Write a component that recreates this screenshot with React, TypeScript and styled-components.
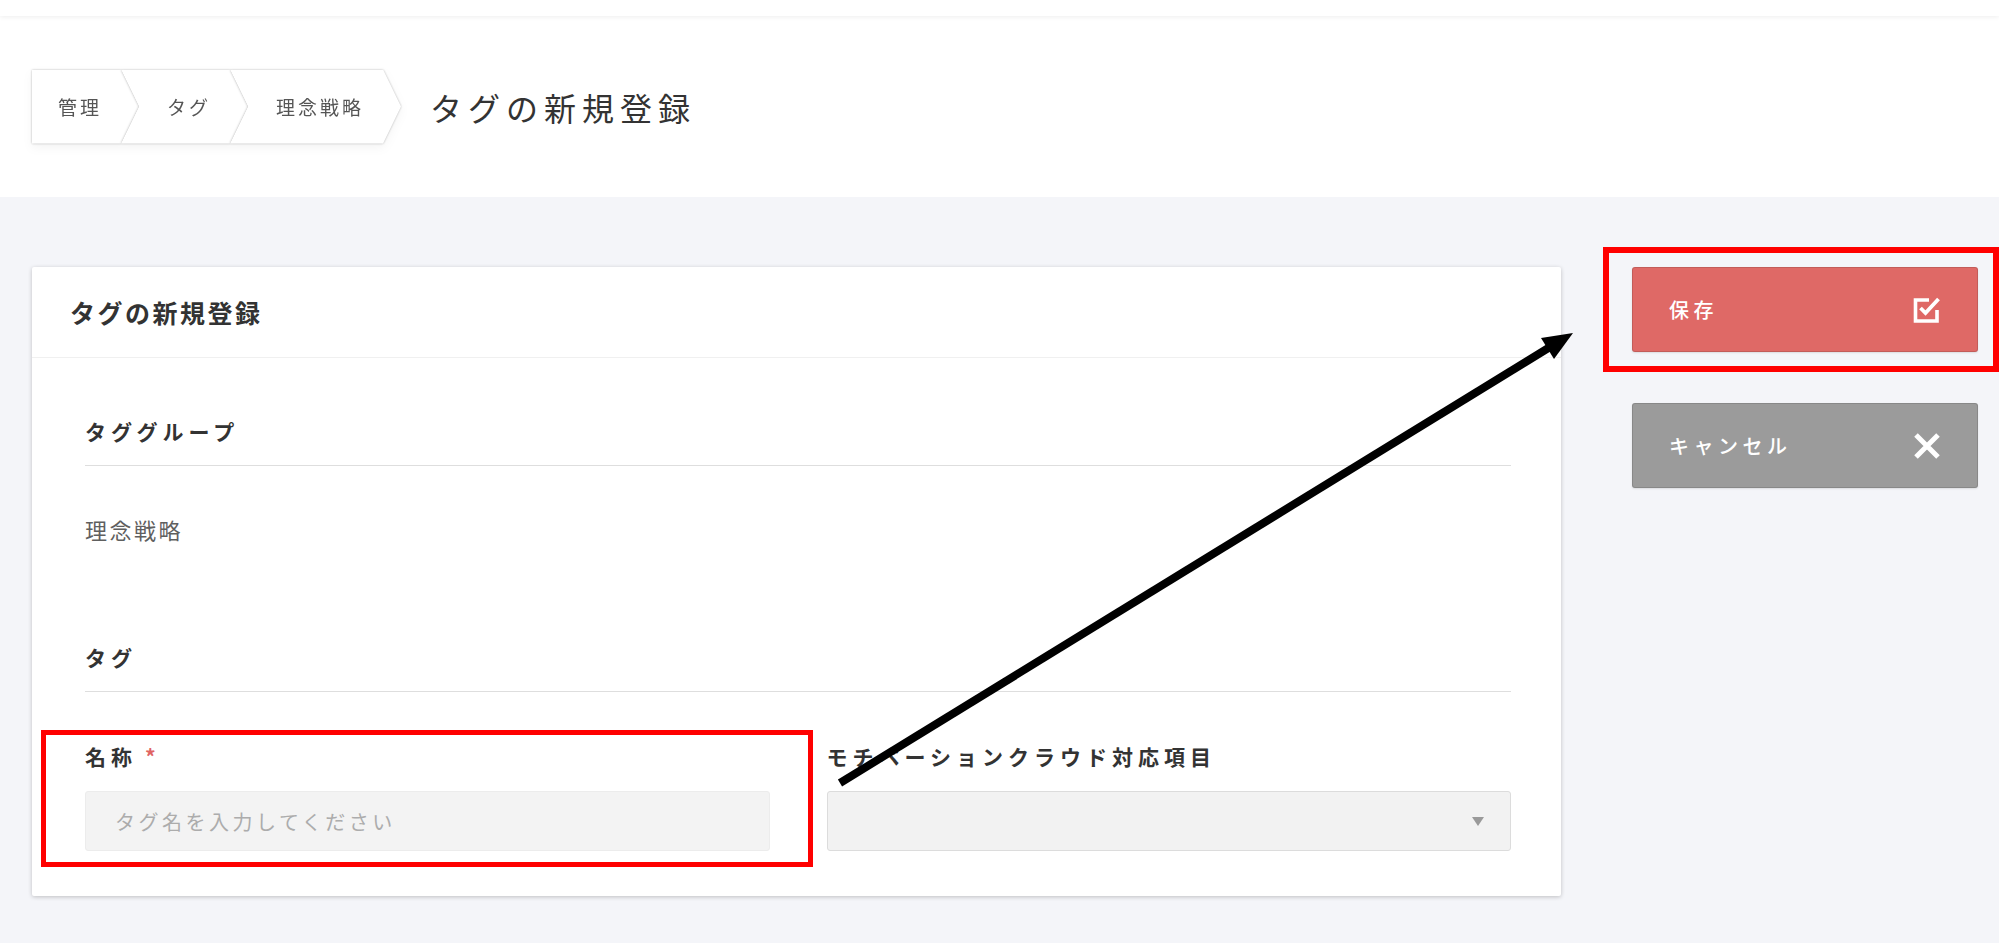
import React from "react";
import styled, { createGlobalStyle } from "styled-components";

const GlobalStyle = createGlobalStyle`
  html, body {
    margin: 0;
    padding: 0;
    background: #f4f5f9;
  }
  body {
    font-family: "Noto Sans CJK JP", "Noto Sans", sans-serif;
    color: #333;
  }
  * { box-sizing: border-box; }
`;

const Page = styled.div`
  position: relative;
  width: 1999px;
  min-height: 943px;
  overflow: hidden;
  background: #f4f5f9;
`;

const TopBar = styled.div`
  position: relative;
  z-index: 1;
  height: 16px;
  background: #fff;
  box-shadow: 0 1px 5px rgba(0, 0, 0, 0.07);
`;

const Header = styled.header`
  height: 181px;
  background: #fff;
  display: flex;
  align-items: center;
  gap: 29px;
  padding-left: 32px;
`;

const Breadcrumb = styled.nav`
  display: flex;
  height: 74px;
  filter: drop-shadow(0 4px 5px rgba(0, 0, 0, 0.045));
`;

const CrumbFrame = styled.div<{ $first?: boolean }>`
  margin-left: ${(p) => (p.$first ? "0" : "-18px")};
  filter: drop-shadow(0 0 0.8px rgba(0, 0, 0, 0.28));
`;

const Crumb = styled.div<{ $first?: boolean }>`
  height: 74px;
  display: flex;
  align-items: center;
  background: #fff;
  padding: 0 37px 0 ${(p) => (p.$first ? "26px" : "46px")};
  font-size: 19px;
  letter-spacing: 3px;
  color: #555;
  white-space: nowrap;
  clip-path: ${(p) =>
    p.$first
      ? "polygon(0 0, calc(100% - 18px) 0, 100% 50%, calc(100% - 18px) 100%, 0 100%)"
      : "polygon(0 0, calc(100% - 18px) 0, 100% 50%, calc(100% - 18px) 100%, 0 100%, 18px 50%)"};
`;

const PageTitle = styled.h1`
  margin: 0;
  font-size: 32px;
  font-weight: 400;
  letter-spacing: 6px;
  color: #333;
  line-height: 1;
`;

const Main = styled.main`
  display: flex;
  align-items: flex-start;
  gap: 71px;
  padding: 70px 21px 46px 32px;
`;

const Card = styled.section`
  flex: 1;
  background: #fff;
  border-radius: 2px;
  box-shadow: 0 1px 4px rgba(0, 0, 0, 0.22);
`;

const CardHeader = styled.div`
  height: 91px;
  display: flex;
  align-items: center;
  padding-left: 38px;
  border-bottom: 1px solid #f0f0f0;
  font-size: 25px;
  font-weight: 700;
  letter-spacing: 2.5px;
  color: #333;
`;

const CardBody = styled.div`
  padding: 49px 50px 45px 53px;
`;

const SectionTitle = styled.h2<{ $gap: number }>`
  margin: ${(p) => p.$gap}px 0 0;
  font-size: 21px;
  font-weight: 700;
  letter-spacing: 5px;
  line-height: 48px;
  padding-bottom: 10px;
  border-bottom: 1px solid #dedede;
  color: #333;
`;

const Value = styled.div`
  margin-top: 43px;
  font-size: 22px;
  letter-spacing: 2.5px;
  line-height: 40px;
  color: #5f5f5f;
`;

const FieldsRow = styled.div`
  margin-top: 49px;
  display: grid;
  grid-template-columns: 1fr 1fr;
  gap: 57px;
`;

const Field = styled.div`
  position: relative;
  display: flex;
  flex-direction: column;
  gap: 20px;
`;

const Label = styled.label`
  font-size: 21px;
  font-weight: 700;
  letter-spacing: 5px;
  line-height: 30px;
  color: #333;
  white-space: nowrap;
`;

const Required = styled.span`
  color: #e06464;
  margin-left: 8px;
  font-weight: 700;
  letter-spacing: 0;
`;

const TextInput = styled.input`
  height: 60px;
  width: 100%;
  padding: 0 20px 0 29px;
  border: 1px solid #ececec;
  border-radius: 3px;
  background: #f3f3f3;
  font-family: "Noto Sans CJK JP", "Noto Sans", sans-serif;
  font-size: 20px;
  letter-spacing: 3.5px;
  color: #333;
  outline: none;
  &::placeholder {
    color: #acacac;
  }
`;

const SelectBox = styled.div`
  height: 60px;
  display: flex;
  align-items: center;
  justify-content: flex-end;
  padding-right: 26px;
  border: 1px solid #dcdcdc;
  border-radius: 3px;
  background: #f2f2f2;
`;

const Side = styled.aside`
  width: 346px;
  display: flex;
  flex-direction: column;
  gap: 51px;
`;

const ButtonSlot = styled.div`
  position: relative;
`;

const ActionButton = styled.button<{ $bg: string }>`
  width: 100%;
  height: 85px;
  display: flex;
  align-items: center;
  justify-content: space-between;
  padding: 0 36px 0 36px;
  background: ${(p) => p.$bg};
  border: 1px solid rgba(0, 0, 0, 0.12);
  border-radius: 3px;
  box-shadow: 0 1px 2px rgba(0, 0, 0, 0.1);
  color: #fff;
  font-family: "Noto Sans CJK JP", "Noto Sans", sans-serif;
  font-size: 20px;
  font-weight: 500;
  letter-spacing: 4.5px;
  cursor: pointer;
`;

const Highlight = styled.div<{
  $t: number;
  $r: number;
  $b: number;
  $l: number;
  $w: number;
}>`
  position: absolute;
  top: ${(p) => p.$t}px;
  right: ${(p) => p.$r}px;
  bottom: ${(p) => p.$b}px;
  left: ${(p) => p.$l}px;
  border: ${(p) => p.$w}px solid #ff0000;
  pointer-events: none;
`;

const ArrowLayer = styled.svg`
  position: absolute;
  top: 0;
  left: 0;
  pointer-events: none;
`;

const CheckIcon = () => (
  <svg width="30" height="30" viewBox="0 0 30 30" fill="none">
    <path d="M18 5 H4.5 V26 H26 V15" stroke="#fff" strokeWidth="3.6" />
    <path d="M9.5 13 L14.5 18 L27.5 4" stroke="#fff" strokeWidth="3.8" />
  </svg>
);

const CloseIcon = () => (
  <svg width="28" height="28" viewBox="0 0 28 28" fill="none">
    <path d="M3 3 L25 25 M25 3 L3 25" stroke="#fff" strokeWidth="5" />
  </svg>
);

const Caret = () => (
  <svg width="12" height="9" viewBox="0 0 12 9">
    <path d="M0 0 H12 L6 9 Z" fill="#9a9a9a" />
  </svg>
);

const crumbs = ["管理", "タグ", "理念戦略"];

export default function App() {
  return (
    <Page>
      <GlobalStyle />
      <TopBar />
      <Header>
        <Breadcrumb>
          {crumbs.map((c, i) => (
            <CrumbFrame key={c} $first={i === 0}>
              <Crumb $first={i === 0}>{c}</Crumb>
            </CrumbFrame>
          ))}
        </Breadcrumb>
        <PageTitle>タグの新規登録</PageTitle>
      </Header>
      <Main>
        <Card>
          <CardHeader>タグの新規登録</CardHeader>
          <CardBody>
            <SectionTitle $gap={0}>タググループ</SectionTitle>
            <Value>理念戦略</Value>
            <SectionTitle $gap={84}>タグ</SectionTitle>
            <FieldsRow>
              <Field>
                <Label>
                  名称<Required>*</Required>
                </Label>
                <TextInput placeholder="タグ名を入力してください" />
                <Highlight $t={-11} $r={-43} $b={-16} $l={-44} $w={5} />
              </Field>
              <Field>
                <Label>モチベーションクラウド対応項目</Label>
                <SelectBox role="combobox">
                  <Caret />
                </SelectBox>
              </Field>
            </FieldsRow>
          </CardBody>
        </Card>
        <Side>
          <ButtonSlot>
            <ActionButton $bg="#df6966">
              <span>保存</span>
              <CheckIcon />
            </ActionButton>
            <Highlight $t={-20} $r={-21} $b={-20} $l={-29} $w={6} />
          </ButtonSlot>
          <ButtonSlot>
            <ActionButton $bg="#9b9b9b">
              <span>キャンセル</span>
              <CloseIcon />
            </ActionButton>
          </ButtonSlot>
        </Side>
      </Main>
      <ArrowLayer width="1999" height="943" viewBox="0 0 1999 943">
        <line x1="840" y1="783" x2="1550" y2="347" stroke="#000" strokeWidth="8" />
        <polygon points="1573,333 1541,338 1554,359" fill="#000" />
      </ArrowLayer>
    </Page>
  );
}
